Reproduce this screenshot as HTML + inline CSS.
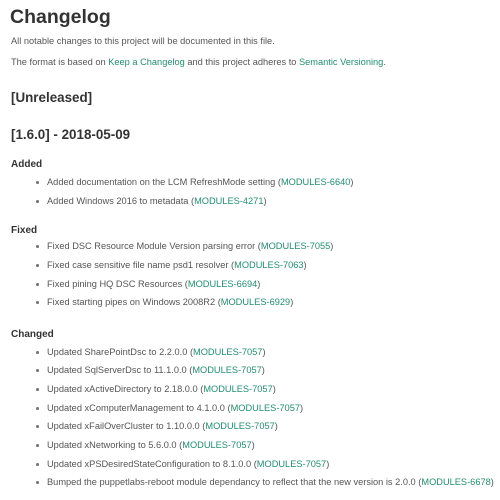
<!DOCTYPE html>
<html><head><meta charset="utf-8"><style>
body{margin:0;width:500px;height:500px;background:#fff;font-family:"Liberation Sans",sans-serif;color:#555;position:relative;overflow:hidden}
div{position:absolute;white-space:nowrap;line-height:12px;font-size:9.25px}
a{color:#1f8f70;text-decoration:none}
.h1{font-size:19.5px;font-weight:bold;color:#333;line-height:24px}
.h2{font-size:13.4px;font-weight:bold;color:#333;line-height:18px}
.h3{font-size:10px;font-weight:bold;color:#333}
.li{left:47px}
.li:before{content:"";position:absolute;left:-11px;top:5px;width:2.5px;height:2.5px;background:#777;border-radius:50%}
</style></head><body>
<div class="h1" style="left:10px;top:5px">Changelog</div>
<div style="left:11px;top:35px">All notable changes to this project will be documented in this file.</div>
<div style="left:11px;top:56px">The format is based on <a>Keep a Changelog</a> and this project adheres to <a>Semantic Versioning</a>.</div>
<div class="h2" style="left:11px;top:89px">[Unreleased]</div>
<div class="h2" style="left:11px;top:126px">[1.6.0] - 2018-05-09</div>
<div class="h3" style="left:11px;top:159px">Added</div>
<div class="li" style="top:176px">Added documentation on the LCM RefreshMode setting (<a>MODULES-6640</a>)</div>
<div class="li" style="top:195px">Added Windows 2016 to metadata (<a>MODULES-4271</a>)</div>
<div class="h3" style="left:11px;top:225px">Fixed</div>
<div class="li" style="top:240px">Fixed DSC Resource Module Version parsing error (<a>MODULES-7055</a>)</div>
<div class="li" style="top:259px">Fixed case sensitive file name psd1 resolver (<a>MODULES-7063</a>)</div>
<div class="li" style="top:278px">Fixed pining HQ DSC Resources (<a>MODULES-6694</a>)</div>
<div class="li" style="top:296px">Fixed starting pipes on Windows 2008R2 (<a>MODULES-6929</a>)</div>
<div class="h3" style="left:11px;top:329px">Changed</div>
<div class="li" style="top:346px">Updated SharePointDsc to 2.2.0.0 (<a>MODULES-7057</a>)</div>
<div class="li" style="top:364px">Updated SqlServerDsc to 11.1.0.0 (<a>MODULES-7057</a>)</div>
<div class="li" style="top:383px">Updated xActiveDirectory to 2.18.0.0 (<a>MODULES-7057</a>)</div>
<div class="li" style="top:402px">Updated xComputerManagement to 4.1.0.0 (<a>MODULES-7057</a>)</div>
<div class="li" style="top:420px">Updated xFailOverCluster to 1.10.0.0 (<a>MODULES-7057</a>)</div>
<div class="li" style="top:439px">Updated xNetworking to 5.6.0.0 (<a>MODULES-7057</a>)</div>
<div class="li" style="top:458px">Updated xPSDesiredStateConfiguration to 8.1.0.0 (<a>MODULES-7057</a>)</div>
<div class="li" style="top:476px">Bumped the puppetlabs-reboot module dependancy to reflect that the new version is 2.0.0 (<a>MODULES-6678</a>)</div>
</body></html>
